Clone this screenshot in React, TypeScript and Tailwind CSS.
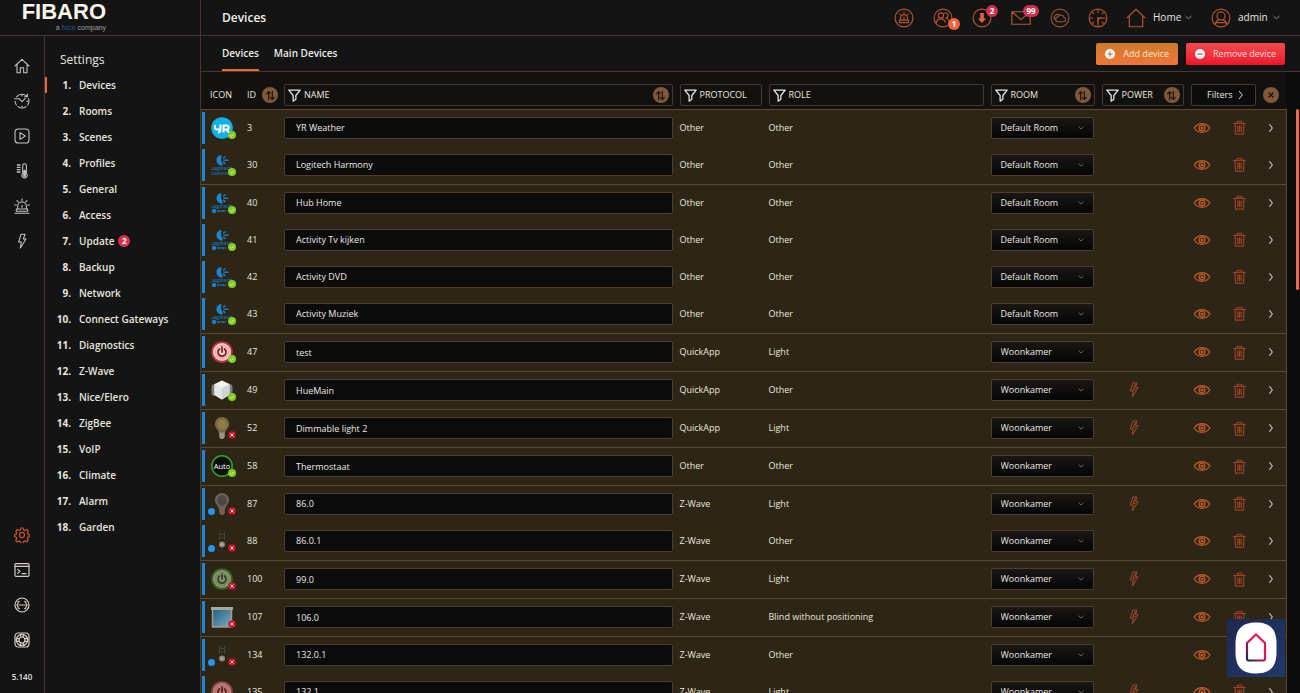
import React from 'react';

type IconProps = { className?: string; sw?: number; children: React.ReactNode };

function Svg({ className = 'size-4', sw = 1.5, children }: IconProps) {
  return (
    <svg
      viewBox="0 0 24 24"
      className={`shrink-0 ${className}`}
      fill="none"
      stroke="currentColor"
      strokeWidth={sw}
      strokeLinecap="round"
      strokeLinejoin="round"
      aria-hidden="true"
    >
      {children}
    </svg>
  );
}

/* ---------- line icons ---------- */

const railTop = [
  {
    label: 'Dashboard',
    icon: <path d="M1.500 12 12 2 22.500 12M4.500 10v12H9.500V14.500H14.500V22H19.500V10" />,
  },
  {
    label: 'History',
    icon: (
      <>
        <path d="M4 5.500A10.400 10.400 0 0 1 20 5.500M21.800 8.500A10.400 10.400 0 0 1 20.500 18M18 20.500A10.400 10.400 0 0 1 6 20.500M3.500 18A10.400 10.400 0 0 1 1.600 12.500M20 1.500v4.200h-4M1 8.500h5" />
        <path d="M7 8l5 5 5-5M12 3v1.500M12 19.500V21M19 12.500h1.500" />
      </>
    ),
  },
  {
    label: 'Scenes',
    icon: (
      <>
        <rect x="1.500" y="1.500" width="21" height="21" rx="5" />
        <path d="M9 7v10l8-5z" />
      </>
    ),
  },
  {
    label: 'Climate',
    icon: (
      <>
        <path d="M13 4a2.800 2.800 0 0 1 5.600 0v11.500a4 4 0 1 1-5.600 0z" />
        <path d="M15.800 12v7" strokeWidth="4" />
        <path d="M5 3h4M5 6.500h4M5 10h4M5 13.500h4" strokeWidth="2" />
      </>
    ),
  },
  {
    label: 'Alarm',
    icon: (
      <>
        <path d="M5.500 16.500v-4a6.500 6.500 0 0 1 13 0v4M3.500 16.500h17V20h-17zM1.500 22.800h21M12 11v3" />
        <path d="M12 1v3M4.500 4l2 2M19.500 4l-2 2M1 10.500h2.500M20.500 10.500H23" />
      </>
    ),
  },
  {
    label: 'Energy',
    icon: <path d="M10.500 2h6l-2.500 7h4L9.500 22.500l1.500-9H7z" />,
  },
];

const railBottom = [
  {
    label: 'Settings',
    active: true,
    icon: (
      <>
        <circle cx="12" cy="12" r="3.800" />
        <path d="M10.200 1.500h3.600l.6 3 2 .9 2.600-1.700 2.500 2.500-1.700 2.600.9 2 2.300.6v3.400l-2.300.6-.9 2 1.700 2.600-2.500 2.500-2.600-1.700-2 .9-.6 3h-3.600l-.6-3-2-.9L5 22.500 2.500 20l1.700-2.600-.9-2-2.300-.6v-3.400l2.300-.6.900-2L2.500 6.200 5 3.700l2.600 1.700 2-.9z" />
      </>
    ),
  },
  {
    label: 'Console',
    icon: (
      <>
        <rect x="1.500" y="2.500" width="21" height="19" rx="1.500" />
        <path d="M1.500 6.500h21M5.500 11l3.500 3-3.500 3M12 17.500h6" />
      </>
    ),
  },
  {
    label: 'Api',
    icon: (
      <>
        <circle cx="12" cy="12" r="10.500" />
        <path d="M8 6.500c-1.500 0-2 .8-2 2.200 0 1.600-.5 3.300-2 3.300 1.500 0 2 1.700 2 3.300 0 1.400.5 2.200 2 2.200M16 6.500c1.500 0 2 .8 2 2.200 0 1.600.5 3.300 2 3.300-1.500 0-2 1.700-2 3.300 0 1.400-.5 2.200-2 2.200M8 12h8" />
      </>
    ),
  },
  {
    label: 'Support',
    icon: (
      <>
        <rect x="1.500" y="1.500" width="21" height="21" rx="5" />
        <circle cx="12" cy="12" r="8.500" />
        <circle cx="12" cy="12" r="4.500" />
        <path d="M10 3.500v4.500M14 3.500v4.500M10 16v4.500M14 16v4.500M3.500 10h4.500M3.500 14h4.500M16 10h4.500M16 14h4.500" />
      </>
    ),
  },
];

const Chevron = ({ className = '' }: { className?: string }) => (
  <Svg className={className} sw={3}>
    <path d="M3 8l9 8 9-8" />
  </Svg>
);

const Funnel = () => (
  <Svg className="size-[13px] text-[#e4e4ea]" sw={2.4}>
    <path d="M1.500 2h21L14.500 12v7L9.500 22.500V12z" />
  </Svg>
);

const Bolt = () => (
  <Svg className="size-4 text-[#a34c2b]" sw={1.5}>
    <path d="M11 1.500h5.500l-2.500 7h4L9.500 22.500l1.500-9H7zM14 3.500l-3.500 8h3.500" />
  </Svg>
);

const Eye = () => (
  <Svg className="size-[18px] text-[#b9592c]" sw={1.8}>
    <path d="M1.500 12c5-7.500 16-7.500 21 0-5 7.500-16 7.500-21 0z" />
    <circle cx="12" cy="12" r="3.800" />
    <circle cx="12" cy="12" r="1.200" fill="currentColor" />
  </Svg>
);

const Trash = () => (
  <Svg className="size-[15px] text-[#9c4229]" sw={1.9}>
    <path d="M3 5.500h18M8.500 5V2h7v3M5 5.500l.5 17h13l.5-17M9.200 9.500v9M12 9.500v9M14.800 9.500v9" />
  </Svg>
);

function SortButton({ label }: { label: string }) {
  return (
    <button
      type="button"
      aria-label={`Sort by ${label}`}
      className="flex size-4 shrink-0 items-center justify-center rounded-full bg-[#80593a] text-[#1d140d]"
    >
      <Svg className="size-[11px]" sw={2.6}>
        <path d="M8 21V4M3.500 8.500 8 3.500l3.500 4M16 3v17M11.500 16l4.500 5 4.500-5" />
      </Svg>
    </button>
  );
}

/* ---------- device pictures ---------- */

type Kind = 'yr' | 'harmony' | 'logitech' | 'power' | 'powerOff' | 'powerGreen' | 'cube' | 'bulb' | 'bulbGrey' | 'auto' | 'sensor' | 'blind';

function PowerButton({ ring, body, mark }: { ring: string; body: string; mark: string }) {
  return (
    <>
      <circle cx="11" cy="11" r="10.800" fill={ring} />
      <circle cx="11" cy="11" r="9" fill={body} />
      <circle cx="11" cy="11" r="6.500" fill={body} stroke={mark} strokeOpacity=".25" />
      <path d="M8.500 8a4 4 0 1 0 5 0M11 6v5" stroke={mark} strokeWidth="1.700" fill="none" strokeLinecap="round" />
    </>
  );
}

function Picture({ kind }: { kind: Kind }) {
  switch (kind) {
    case 'yr':
      return (
        <>
          <circle cx="11" cy="11" r="10.800" fill="#12b0ea" />
          <path d="M4 8v2.500a2 2 0 0 0 2 2h3.500M9.500 7.500v5.500a2.500 2.500 0 0 1-2.500 2.500M12.500 15.500V8.500h3.200a1.900 1.900 0 0 1 0 4H13M15.500 12.500l2.500 3" stroke="#fff" strokeWidth="2" fill="none" />
        </>
      );
    case 'harmony':
    case 'logitech':
      return (
        <>
          <path d="M10.500 1a5.200 5.200 0 1 0 1.500 10.200L10 6z" fill="#1c86d6" />
          <path d="M12 4.500 14.500 2.500M12.500 6.200h5M12 8l2.500 1.800" stroke="#2a76b4" strokeWidth="1.600" />
          <text x="10.500" y="16" textAnchor="middle" fontSize="5.500" fontWeight="700" fill="#1d66a0">Logitech</text>
          {kind === 'harmony' ? (
            <text x="10.500" y="20.500" textAnchor="middle" fontSize="4" fontWeight="700" fill="#1d5f92">HARMONY</text>
          ) : (
            <>
              <circle cx="3" cy="19" r="2.200" fill="#1a80d0" />
              <path d="M6 19h9" stroke="#1d66a0" strokeWidth="2" strokeDasharray="2 .5" />
            </>
          )}
        </>
      );
    case 'power':
      return <PowerButton ring="#c62b3e" body="#eccdcd" mark="#8c1420" />;
    case 'powerOff':
      return <PowerButton ring="#8d4a4a" body="#bb7f78" mark="#5d1a1c" />;
    case 'powerGreen':
      return <PowerButton ring="#38621f" body="#85966b" mark="#333b2b" />;
    case 'cube':
      return (
        <>
          <path d="M1 5.500c-.8 3-.8 8 0 11h3V5.500zM21 5.500c.8 3 .8 8 0 11h-3V5.500z" fill="#7b7d78" />
          <path d="M11 1.500 18.500 5v11L11 20.500 3.500 16V5z" fill="#f2f3f3" />
          <path d="M11 9v11.500L3.500 16V5z" fill="#e4e7e8" />
          <path d="M11 9v11.500l7.500-4.500V5z" fill="#ced4d6" />
        </>
      );
    case 'bulb':
    case 'bulbGrey': {
      const grey = kind === 'bulbGrey';
      return (
        <>
          <path d="M11 0a7.200 7.200 0 0 0-7.200 7.200c0 3.500 3.700 5.300 4.200 9.300h6c.5-4 4.200-5.800 4.200-9.300A7.200 7.200 0 0 0 11 0z" fill={grey ? '#68605a' : '#7d693f'} />
          <ellipse cx="11" cy="7.500" rx="4.500" ry="5.300" fill={grey ? '#4b4744' : '#8f7a4c'} />
          <path d="M8.200 15.500h5.600v4.500l-1.600 2H9.800l-1.600-2z" fill={grey ? '#77604c' : '#9a947f'} />
        </>
      );
    }
    case 'auto':
      return (
        <>
          <circle cx="11" cy="11" r="10.200" fill="#0a0f0a" stroke="#2fa52c" strokeWidth="1.500" />
          <text x="11" y="14" textAnchor="middle" fontSize="7.500" fontWeight="500" fill="#fff">Auto</text>
        </>
      );
    case 'sensor':
      return (
        <>
          <path d="M8.500 2v8M13.500 2v8M9.500 4.500h3M9.500 8h3" stroke="#47443b" strokeWidth="1" />
          <circle cx="11" cy="14.500" r="3" fill="#8b867a" />
          <circle cx="11" cy="14.500" r="1.500" fill="#aca695" />
        </>
      );
    case 'blind':
      return (
        <>
          <defs>
            <linearGradient id="blind-sky" x1="0" y1="0" x2="1" y2="1">
              <stop offset="0" stopColor="#1b5f86" />
              <stop offset="1" stopColor="#7eabbd" />
            </linearGradient>
          </defs>
          <rect x="1.500" y="2" width="19" height="19" fill="url(#blind-sky)" stroke="#a19b8c" strokeWidth="1.500" />
          <rect x="0" y="1" width="22" height="3" fill="#aaa698" />
        </>
      );
  }
}

function DeviceIcon({ kind, ok, linked }: { kind: Kind; ok: boolean; linked?: boolean }) {
  return (
    <div className="relative ml-1.5 size-[22px]">
      <svg viewBox="0 0 22 22" className="size-[22px]" aria-hidden="true">
        <Picture kind={kind} />
      </svg>
      <svg viewBox="0 0 8 8" className="absolute -right-[3px] bottom-0 size-2" aria-hidden="true">
        {ok ? (
          <>
            <circle cx="4" cy="4" r="4" fill="#85cc22" />
            <path d="M2.200 4.200 3.500 5.400 5.900 2.900" stroke="#e9ffd0" fill="none" strokeWidth=".8" />
          </>
        ) : (
          <>
            <rect x=".5" y=".5" width="7" height="7" rx="2" fill="#cf1228" />
            <path d="M2.500 2.500l3 3M5.500 2.500l-3 3" stroke="#fff" strokeWidth=".9" />
          </>
        )}
      </svg>
      {linked && <span className="absolute bottom-0 -left-[3px] size-[7px] rounded-full bg-[#2196f3]" />}
    </div>
  );
}

/* ---------- data ---------- */

type Device = {
  id: number;
  name: string;
  protocol: string;
  role: string;
  room: string;
  kind: Kind;
  ok: boolean;
  linked?: boolean;
  power?: boolean;
  last?: boolean;
};

const devices: Device[] = [
  { id: 3, name: 'YR Weather', protocol: 'Other', role: 'Other', room: 'Default Room', kind: 'yr', ok: true },
  { id: 30, name: 'Logitech Harmony', protocol: 'Other', role: 'Other', room: 'Default Room', kind: 'harmony', ok: true, last: true },
  { id: 40, name: 'Hub Home', protocol: 'Other', role: 'Other', room: 'Default Room', kind: 'logitech', ok: true },
  { id: 41, name: 'Activity Tv kijken', protocol: 'Other', role: 'Other', room: 'Default Room', kind: 'logitech', ok: true },
  { id: 42, name: 'Activity DVD', protocol: 'Other', role: 'Other', room: 'Default Room', kind: 'logitech', ok: true },
  { id: 43, name: 'Activity Muziek', protocol: 'Other', role: 'Other', room: 'Default Room', kind: 'logitech', ok: true, last: true },
  { id: 47, name: 'test', protocol: 'QuickApp', role: 'Light', room: 'Woonkamer', kind: 'power', ok: true, last: true },
  { id: 49, name: 'HueMain', protocol: 'QuickApp', role: 'Other', room: 'Woonkamer', kind: 'cube', ok: true, power: true, last: true },
  { id: 52, name: 'Dimmable light 2', protocol: 'QuickApp', role: 'Light', room: 'Woonkamer', kind: 'bulb', ok: false, power: true, last: true },
  { id: 58, name: 'Thermostaat', protocol: 'Other', role: 'Other', room: 'Woonkamer', kind: 'auto', ok: true, last: true },
  { id: 87, name: '86.0', protocol: 'Z-Wave', role: 'Light', room: 'Woonkamer', kind: 'bulbGrey', ok: false, linked: true, power: true },
  { id: 88, name: '86.0.1', protocol: 'Z-Wave', role: 'Other', room: 'Woonkamer', kind: 'sensor', ok: false, linked: true, last: true },
  { id: 100, name: '99.0', protocol: 'Z-Wave', role: 'Light', room: 'Woonkamer', kind: 'powerGreen', ok: false, power: true, last: true },
  { id: 107, name: '106.0', protocol: 'Z-Wave', role: 'Blind without positioning', room: 'Woonkamer', kind: 'blind', ok: false, power: true, last: true },
  { id: 134, name: '132.0.1', protocol: 'Z-Wave', role: 'Other', room: 'Woonkamer', kind: 'sensor', ok: false, linked: true },
  { id: 135, name: '132.1', protocol: 'Z-Wave', role: 'Light', room: 'Woonkamer', kind: 'powerOff', ok: false, power: true },
];

const settings = [
  'Devices', 'Rooms', 'Scenes', 'Profiles', 'General', 'Access', 'Update', 'Backup', 'Network',
  'Connect Gateways', 'Diagnostics', 'Z-Wave', 'Nice/Elero', 'ZigBee', 'VoIP', 'Climate', 'Alarm', 'Garden',
];

/* ---------- page parts ---------- */

function Rail() {
  return (
    <nav aria-label="Main" className="flex w-[45px] shrink-0 flex-col items-center justify-between border-r border-[#463830] pt-3 pb-2">
      <div className="flex flex-col">
        {railTop.map((item) => (
          <button key={item.label} type="button" aria-label={item.label} className="flex h-[35px] items-center text-[#c9c4bf]">
            <Svg className="size-4" sw={1.6}>{item.icon}</Svg>
          </button>
        ))}
      </div>
      <div className="flex flex-col items-center">
        {railBottom.map((item) => (
          <button
            key={item.label}
            type="button"
            aria-label={item.label}
            className={`flex h-[35px] items-center ${item.active ? 'text-[#c4552f]' : 'text-[#d4cdc6]'}`}
          >
            <Svg className="size-4" sw={1.8}>{item.icon}</Svg>
          </button>
        ))}
        <span className="mt-3 text-[8px] leading-4 font-semibold text-[#e6e2de]">5.140</span>
      </div>
    </nav>
  );
}

function Sidebar() {
  return (
    <aside className="flex w-[201px] shrink-0 flex-col border-r border-[#463830]">
      <div className="flex h-9 shrink-0 justify-start border-b border-[#463830]">
        <a href="#home" className="ml-5 flex w-[86px] flex-col items-end font-['Liberation_Sans',sans-serif]">
          <span className="text-[22px] leading-6 font-bold text-[#fbf4ec]">FIBARO</span>
          <span className="text-[7px] leading-2 text-[#a49d97]">
            a <span className="text-[#155b94]">Nice</span> company
          </span>
        </a>
      </div>
      <div className="flex min-h-0 flex-1">
        <Rail />
        <nav aria-label="Settings" className="flex-1 overflow-hidden">
          <h2 className="mt-3 pl-[15px] text-[12px] leading-6 font-medium text-[#e8e4e0]">Settings</h2>
          <ol>
            {settings.map((name, i) => (
              <li key={name} className="flex h-[26px] items-center text-[10px] font-semibold text-[#e8e4df]">
                <span className={`h-4 w-0.5 ${i === 0 ? 'bg-[#e8673c]' : ''}`} />
                <span className="w-6 text-right font-bold">{i + 1}.</span>
                <a href={`#${name}`} className="ml-2">{name}</a>
                {name === 'Update' && (
                  <span className="ml-1 flex size-3 items-center justify-center rounded-full bg-[#d9304c] text-[8px] font-bold text-white">2</span>
                )}
              </li>
            ))}
          </ol>
        </nav>
      </div>
    </aside>
  );
}

function TopBar() {
  return (
    <header className="flex h-9 shrink-0 items-center justify-between border-b border-[#463830] pr-5 pl-[21px]">
      <h1 className="text-[12px] font-semibold text-[#f3f0ed]">Devices</h1>
      <div className="flex items-center text-[#b4552f]">
        <button type="button" aria-label="Alarms" className="w-[39px]">
          <Svg className="size-5" sw={1.4}>
            <circle cx="12" cy="12" r="10.700" />
            <path d="M8 14.500v-2.500a4 4 0 0 1 8 0v2.500M6.500 14.500h11v3h-11zM12 11v3M12 4.500v1.500M6.500 7l1 1M17.500 7l-1 1" />
          </Svg>
        </button>
        <button type="button" aria-label="Users" className="relative w-[39px]">
          <Svg className="size-5" sw={1.4}>
            <circle cx="12" cy="12" r="10.700" />
            <circle cx="9.500" cy="9" r="3.200" />
            <path d="M4 18c.5-3.500 2.500-5 5.500-5s4.500 1.500 5.200 4M14 6.200a3 3 0 1 1 1.200 5.800c2 .3 3.300 1.500 3.800 3.500" />
          </Svg>
          <span className="absolute top-2.5 left-[15px] flex size-3 items-center justify-center rounded-full bg-[#f0633d] text-[8px] font-bold text-white">1</span>
        </button>
        <button type="button" aria-label="Updates" className="relative w-[39px]">
          <Svg className="size-5" sw={1.4}>
            <circle cx="12" cy="12" r="10.700" />
            <path d="M9.800 6h4.400v6.500H17L12 18l-5-5.500h2.800z" fill="#e0603a" stroke="none" />
          </Svg>
          <span className="absolute -top-[3px] left-3.5 flex size-3 items-center justify-center rounded-full bg-[#d0304c] text-[8px] font-bold text-white">2</span>
        </button>
        <button type="button" aria-label="Messages" className="relative w-[39px]">
          <Svg className="size-5" sw={1.4}>
            <path d="M1 4.500h22v15H1zM1 4.500l11 9.500 11-9.500" />
          </Svg>
          <span className="absolute -top-[3px] left-3 flex h-3 w-4 items-center justify-center rounded-full bg-[#d0304c] text-[8px] font-bold text-white">99</span>
        </button>
        <button type="button" aria-label="Weather" className="w-[38px]">
          <Svg className="size-5 text-[#8f5438]" sw={1.4}>
            <circle cx="12" cy="12" r="10.700" />
            <path d="M9 16.500h7.500a2.700 2.700 0 0 0 .3-5.300 3.800 3.800 0 0 0-7-.6A3 3 0 0 0 9 16.500zM5.500 13.500a4 4 0 0 1 6-5" />
          </Svg>
        </button>
        <button type="button" aria-label="Clock" className="w-[38px]">
          <Svg className="size-5" sw={1.4}>
            <circle cx="12" cy="12" r="10.700" />
            <path d="M12 3v2.500M12 18.500V21M3 12h2.500M18.500 12H21M5.600 5.600l1.300 1.300M18.400 5.600l-1.300 1.300M5.600 18.400l1.300-1.300M18.400 18.400l-1.300-1.300" />
            <path d="M12 12v5.500M12 12h5" strokeWidth="2" />
          </Svg>
        </button>
        <button type="button" className="flex items-center">
          <Svg className="size-5" sw={1.4}>
            <path d="M1.500 11.500 12 1.500l10.500 10M4 9.500v13h16v-13" />
          </Svg>
          <span className="ml-[7px] w-7 text-left text-[10px] font-medium text-[#eae6e2]">Home</span>
          <Chevron className="ml-1 size-[7px] text-[#a9a39e]" />
        </button>
        <button type="button" className="ml-[19px] flex items-center">
          <Svg className="size-5" sw={1.4}>
            <circle cx="12" cy="12" r="10.700" />
            <circle cx="12" cy="9.500" r="4.800" />
            <path d="M5 19.500c1-3.500 3-5 4.500-5.500M19 19.500c-1-3.500-3-5-4.500-5.500M6 17.500h12" />
          </Svg>
          <span className="ml-[7px] w-[29px] text-left text-[10px] font-medium text-[#eae6e2]">admin</span>
          <Chevron className="ml-1.5 size-[7px] text-[#a9a39e]" />
        </button>
      </div>
    </header>
  );
}

function Tabs() {
  return (
    <div className="flex h-9 shrink-0 items-center justify-between border-b border-[#463830] pr-[15px] pl-[21px]">
      <nav aria-label="Device views" className="flex h-full gap-[15px] text-[10px] font-semibold text-[#eeeae6]">
        <a href="#devices" className="flex items-center border-t-2 border-b-2 border-t-transparent border-b-[#e8673c]">Devices</a>
        <a href="#main-devices" className="flex items-center">Main Devices</a>
      </nav>
      <div className="flex gap-2 text-[9px] font-medium">
        <button type="button" className="flex h-[22px] items-center gap-2 rounded-xs bg-linear-to-b from-[#cc7c2c] to-[#f0743a] px-[9px] text-[#fde3c4]">
          <svg viewBox="0 0 10 10" className="size-2.5" aria-hidden="true">
            <circle cx="5" cy="5" r="5" fill="#fff" />
            <path d="M5 2.500v5M2.500 5h5" stroke="#cf7230" strokeWidth="1.200" />
          </svg>
          Add device
        </button>
        <button type="button" className="flex h-[22px] items-center gap-2 rounded-xs bg-linear-to-b from-[#f2484f] to-[#ee1029] px-[9px] text-[#ffdedb]">
          <svg viewBox="0 0 10 10" className="size-2.5" aria-hidden="true">
            <circle cx="5" cy="5" r="5" fill="#fff" />
            <path d="M2.500 5h5" stroke="#e6283a" strokeWidth="1.200" />
          </svg>
          Remove device
        </button>
      </div>
    </div>
  );
}

function FilterBox({ label, sort }: { label: string; sort?: boolean }) {
  return (
    <div className="mr-[7px] flex h-[22px] items-center justify-between rounded-xs border border-[#463830] bg-[#13110f] px-[3px]">
      <button type="button" className="flex items-center gap-[3px] font-medium">
        <Funnel />
        {label}
      </button>
      {sort && <SortButton label={label} />}
    </div>
  );
}

function DeviceRow({ d }: { d: Device }) {
  return (
    <tr className={d.last ? 'h-[38px] border-b border-[#5a4833]' : 'h-[37px]'}>
      <td className="p-0">
        <div className="flex items-center pl-px">
          <span className="h-8 w-[3px] bg-[#1f86cf]" />
          <DeviceIcon kind={d.kind} ok={d.ok} linked={d.linked} />
        </div>
      </td>
      <td className="p-0">{d.id}</td>
      <td className="p-0 pr-[7px]">
        <input
          type="text"
          aria-label={`Name of device ${d.id}`}
          defaultValue={d.name}
          className="block h-[22px] w-full rounded-xs border border-[#4c3f30] bg-[#0c0b0b] pl-[11px] text-[#ece8e3]"
        />
      </td>
      <td className="p-0">{d.protocol}</td>
      <td className="p-0">{d.role}</td>
      <td className="p-0 pr-2">
        <div className="relative">
          <select
            aria-label={`Room of device ${d.id}`}
            defaultValue={d.room}
            className="block h-[22px] w-full appearance-none rounded-xs border border-[#4c3f30] bg-linear-to-b from-[#1a1715] to-[#060606] pl-[9px] text-[#ece8e3]"
          >
            <option>Default Room</option>
            <option>Woonkamer</option>
          </select>
          <span className="pointer-events-none absolute inset-y-0 right-2.5 flex items-center">
            <Chevron className="size-1.5 text-[#8a847c]" />
          </span>
        </div>
      </td>
      <td className="p-0 pl-6">{d.power && <Bolt />}</td>
      <td className="p-0">
        <div className="flex items-center">
          <button type="button" aria-label={`Hide device ${d.id}`} className="ml-0.5"><Eye /></button>
          <button type="button" aria-label={`Delete device ${d.id}`} className="ml-[21px]"><Trash /></button>
          <button type="button" aria-label={`Open device ${d.id}`} className="ml-5">
            <Svg className="size-2 text-[#c9c2b4]" sw={3.5}>
              <path d="M8 2l8 10-8 10" />
            </Svg>
          </button>
        </div>
      </td>
    </tr>
  );
}

function DeviceTable() {
  return (
    <div className="flex min-h-0 flex-1 bg-[#0d0c0c]">
      <div className="min-w-0 flex-1 overflow-y-auto [scrollbar-width:none]">
        <table className="w-full min-w-[800px] table-fixed border-collapse text-left text-[9px] leading-4 font-medium text-[#ece7dc]">
          <colgroup>
            <col className="w-[46px]" />
            <col className="w-[37px]" />
            <col />
            <col className="w-[89px]" />
            <col className="w-[222px]" />
            <col className="w-[111px]" />
            <col className="w-[89px]" />
            <col className="w-[96px]" />
          </colgroup>
          <thead>
            <tr className="h-[37px] border-b border-[#5a4833] bg-[#121110]">
              <th scope="col" className="p-0 pt-2.5 pl-[9px] font-medium">ICON</th>
              <th scope="col" className="p-0 pt-2.5 font-medium">
                <div className="flex items-center justify-between pr-1.5">
                  ID
                  <SortButton label="id" />
                </div>
              </th>
              <th scope="col" className="p-0 pt-2.5"><FilterBox label="NAME" sort /></th>
              <th scope="col" className="p-0 pt-2.5"><FilterBox label="PROTOCOL" /></th>
              <th scope="col" className="p-0 pt-2.5"><FilterBox label="ROLE" /></th>
              <th scope="col" className="p-0 pt-2.5"><FilterBox label="ROOM" sort /></th>
              <th scope="col" className="p-0 pt-2.5"><FilterBox label="POWER" sort /></th>
              <th scope="col" className="p-0 pt-2.5">
                <div className="flex items-center gap-[7px]">
                  <button type="button" className="flex h-[22px] w-[65px] items-center justify-end gap-1 rounded-xs border border-[#463830] bg-[#0d0c0c] pr-2.5 font-medium">
                    Filters
                    <Svg className="size-2" sw={2.8}>
                      <path d="M7 1l9 11-9 11" />
                    </Svg>
                  </button>
                  <button type="button" aria-label="Clear filters" className="flex size-4 items-center justify-center rounded-full bg-[#80593a] text-[#1d140d]">
                    <Svg className="size-1.5" sw={5}>
                      <path d="M4 4l16 16M20 4L4 20" />
                    </Svg>
                  </button>
                </div>
              </th>
            </tr>
          </thead>
          <tbody className="border-r border-[#5a4833] bg-[#2d2516]">
            {devices.map((d) => (
              <DeviceRow key={d.id} d={d} />
            ))}
          </tbody>
        </table>
      </div>
      <div className="flex w-[13px] shrink-0 justify-end pt-[37px] pr-px">
        <span className="h-[181px] w-[3px] rounded-full bg-[#f26a44]" />
      </div>
    </div>
  );
}

function HelpButton() {
  return (
    <button
      type="button"
      aria-label="Help"
      className="absolute right-[15px] bottom-4 flex h-[58px] w-[58px] items-center justify-center bg-linear-to-br from-[#1f2850] to-[#20396d]"
    >
      <svg viewBox="0 0 42 52" className="h-[52px] w-[42px]" aria-hidden="true">
        <defs>
          <linearGradient id="help-home" x1="0" y1="1" x2=".5" y2=".4">
            <stop offset="0" stopColor="#1b2350" />
            <stop offset="1" stopColor="#e01650" />
          </linearGradient>
        </defs>
        <path d="M21 .5C35 .5 41.500 7 41.500 22v8c0 15-6.500 21.500-20.500 21.500S.5 45 .5 30v-8C.5 7 7 .5 21 .5z" fill="#fff" />
        <path d="M21 12.500 30 21v15.500a2 2 0 0 1-2 2H14a2 2 0 0 1-2-2V21z" fill="none" stroke="url(#help-home)" strokeWidth="2.200" strokeLinejoin="round" />
      </svg>
    </button>
  );
}

export default function App() {
  return (
    <div className="relative flex h-screen overflow-hidden bg-[#141414] font-['Open_Sans',sans-serif]">
      <Sidebar />
      <main className="flex min-w-0 flex-1 flex-col">
        <TopBar />
        <Tabs />
        <DeviceTable />
      </main>
      <HelpButton />
    </div>
  );
}
